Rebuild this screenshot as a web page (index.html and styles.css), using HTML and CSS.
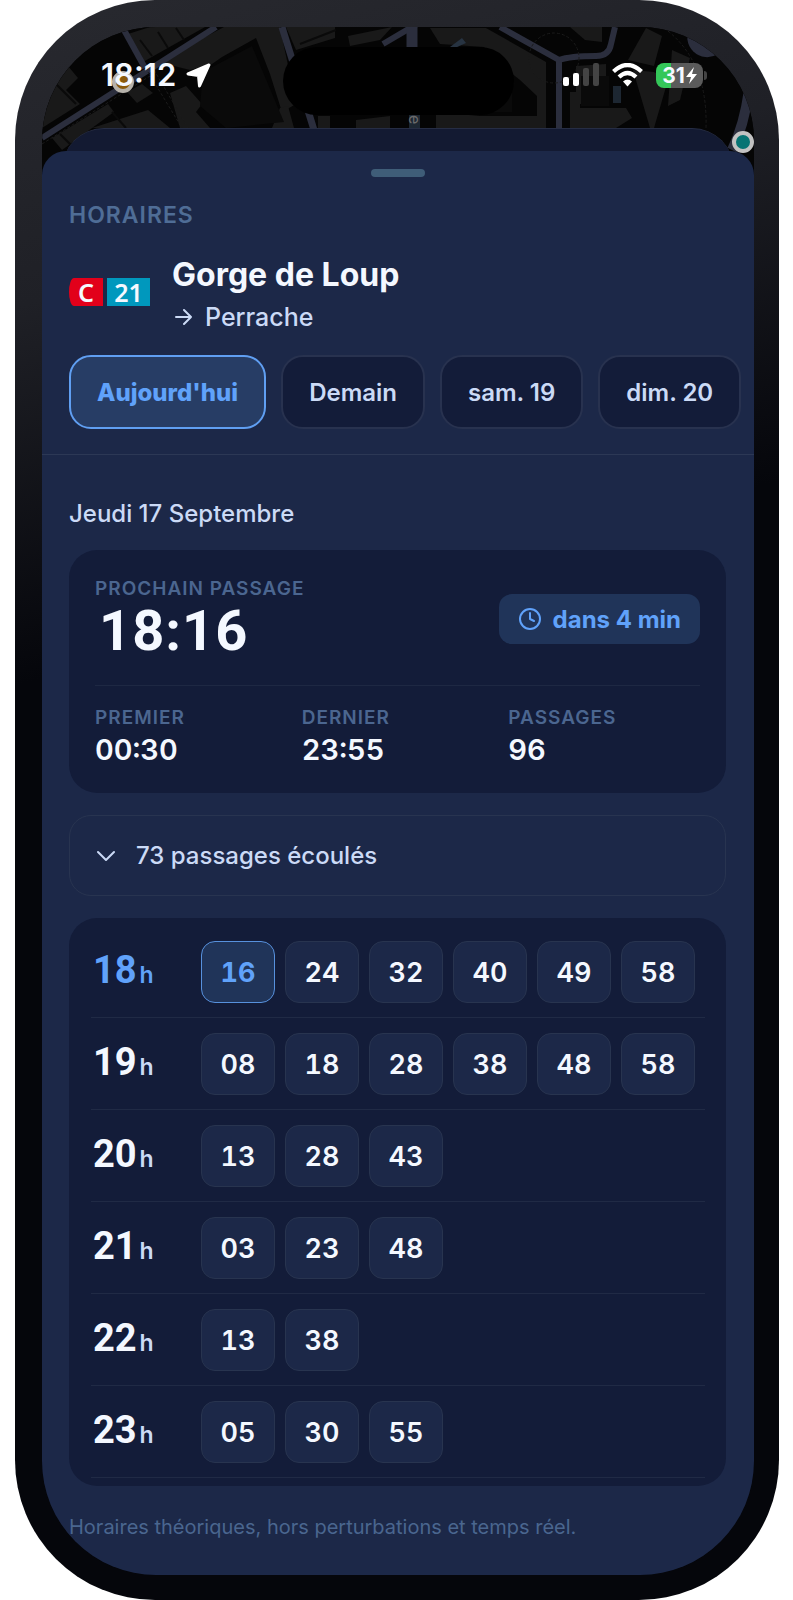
FILE: index.html
```html
<!DOCTYPE html>
<html lang="fr">
<head>
    <meta charset="UTF-8">
    <meta name="viewport" content="width=device-width, initial-scale=1.0">
    <title>Horaires - Gorge de Loup</title>
    <link rel="stylesheet" href="styles.css">
</head>
<body>
    <div class="phone">
        <div class="screen">
            <!-- Map behind the sheets -->
            <svg class="map" viewBox="42 27 712 150" preserveAspectRatio="xMidYMin slice" aria-hidden="true">
                <rect x="42" y="27" width="712" height="150" fill="#050505"/>
                <g fill="#191919">
                    <path d="M42 98 68 66 78 78 66 90 80 104 42 128z"/>
                    <path d="M128 34 150 27 205 27 143 62z"/>
                    <path d="M52 138 108 104 114 112 62 150z"/>
                    <path d="M92 128 148 110 170 128H92z"/>
                    <path d="M127 92 142 84 153 93 137 103z"/>
                    <path d="M158 62 224 27H280L296 104 282 112 270 74 256 38 222 57 212 64 190 70z"/>
                    <path d="M170 93 186 86 202 104 196 112 210 128H180z"/>
                    <path d="M286 27H335V38L296 50z"/>
                    <path d="M348 36 392 27 380 40 350 46z"/>
                    <path d="M280 108 288 106 294 128H272z"/>
                    <path d="M318 116H330V128H318z"/>
                    <path d="M356 120 390 116V128H356z"/>
                    <path d="M430 28H486L546 62V128H436V112L480 116H537V96L520 80 500 64 484 47 440 44z"/>
                    <path d="M570 92H580V108H626L632 118 616 128H570z"/>
                    <path d="M576 66 606 64V104H576z"/>
                    <path d="M628 60 646 28 662 36 654 66z"/>
                    <path d="M633 70 654 72 668 80 654 128H650z"/>
                    <path d="M570 27H602V42L585 40z"/>
                    <path d="M672 50 690 58 680 100 668 106z"/>
                </g>
                <g fill="#0a0a0a">
                    <path d="M203 72 252 46 284 122 226 128 200 106z"/>
                    <path d="M436 84 486 72 512 92V112H440z"/>
                    <rect x="581" y="76" width="28" height="30"/>
                </g>
                <g fill="none" stroke="#0a0a0a" stroke-width="2">
                    <path d="M56 84 76 104M140 40 152 56M158 32 168 48M176 28 184 40M112 112 126 128M60 134 74 148M490 56 514 84M300 44 336 30"/>
                </g>
                <g fill="none" stroke="#2b2e3d" stroke-width="6">
                    <path d="M42 138 216 27"/>
                    <path d="M124 30 145 68"/>
                    <path d="M282 27 314 130" stroke-width="7"/>
                    <path d="M383 44 434 14"/>
                    <path d="M412 27V50" stroke-width="11"/>
                    <path d="M500 27 559 60V130"/>
                    <path d="M559 60Q570 56 596 56Q609 56 611 44L615 27"/>
                    <path d="M749 90Q744 126 732 150" stroke-width="10"/>
                </g>
                <path d="M690 27A20 20 0 0 0 718 54z" fill="#2b2e3d"/>
                <path d="M450 47 462 38 466 43 455 48z" fill="#273341"/>
                <rect x="613" y="86" width="8" height="17" fill="#1d2732"/>
                <rect x="409" y="115" width="11" height="14" fill="#1d2732"/>
                <g fill="none" stroke="#1b1b1b" stroke-dasharray="3 2">
                    <circle cx="554" cy="58" r="25"/>
                    <path d="M148 72 182 128M154 70 188 128M664 28Q708 60 706 128M42 144 150 76"/>
                </g>
                <text class="map-label" transform="translate(409 115) rotate(90)">e</text>
                <circle cx="123" cy="82" r="9" fill="#8a5a0c" stroke="#b5b1aa" stroke-width="4"/>
                <circle cx="743" cy="142" r="9" fill="#077474" stroke="#c2c2c2" stroke-width="4"/>
            </svg>

            <!-- Status bar -->
            <div class="status-bar">
                <div class="status-left">
                    <span class="clock">18:12</span>
                    <svg width="25" height="25" viewBox="0 0 25 25" aria-hidden="true">
                        <path d="M23 2 2 11 12.500 12.500 13.500 23z" fill="#fff" stroke="#fff" stroke-width="3" stroke-linejoin="round"/>
                    </svg>
                </div>
                <div class="island"></div>
                <div class="status-right">
                    <svg width="36" height="24" viewBox="0 0 36 24" aria-hidden="true">
                        <rect x="0" y="14" width="6" height="9" rx="2" fill="#fff"/>
                        <rect x="10" y="10" width="6" height="13" rx="2" fill="#fff"/>
                        <rect x="20" y="5" width="6" height="18" rx="2" fill="#444"/>
                        <rect x="30" y="0" width="6" height="23" rx="2" fill="#444"/>
                    </svg>
                    <svg width="31" height="24" viewBox="0 0 31 24" aria-hidden="true">
                        <path d="M1.500 8.500Q15.500 -4.500 29.500 8.500M7 14Q15.500 6 24 14" fill="none" stroke="#fff" stroke-width="4.200"/>
                        <path d="M11 18.500Q15.500 14.500 20 18.500L15.500 23.500z" fill="#fff"/>
                    </svg>
                    <div class="battery">
                        <span>31</span>
                        <svg width="11" height="17" viewBox="0 0 11 17" aria-hidden="true">
                            <path d="M8 0 0 10H5L3 17 11 7H6z" fill="#fff"/>
                        </svg>
                    </div>
                </div>
            </div>

            <div class="sheet-back"></div>

            <!-- Timetable sheet -->
            <main class="sheet">
                <div class="handle"></div>
                <header class="sheet-header">
                    <p class="eyebrow">HORAIRES</p>
                    <div class="stop">
                        <div class="line-logo">
                            <span class="line-letter">C</span>
                            <span class="line-number">21</span>
                        </div>
                        <div class="stop-text">
                            <h1>Gorge de Loup</h1>
                            <p class="direction">
                                <svg width="17" height="18" viewBox="0 0 17 18" aria-hidden="true">
                                    <path d="M1 9H16M9 2 16 9 9 16" fill="none" stroke="currentColor" stroke-width="2" stroke-linecap="round" stroke-linejoin="round"/>
                                </svg>
                                Perrache
                            </p>
                        </div>
                    </div>
                    <nav class="days">
                        <button class="day active" type="button">Aujourd'hui</button>
                        <button class="day" type="button">Demain</button>
                        <button class="day" type="button">sam. 19</button>
                        <button class="day" type="button">dim. 20</button>
                    </nav>
                </header>

                <section class="content">
                    <h2 class="date">Jeudi 17 Septembre</h2>

                    <div class="next-card">
                        <div class="next-top">
                            <div>
                                <p class="label">PROCHAIN PASSAGE</p>
                                <p class="next-time">18:16</p>
                            </div>
                            <span class="countdown">
                                <svg width="24" height="24" viewBox="0 0 24 24" fill="none" stroke="currentColor" stroke-width="2" stroke-linecap="round" stroke-linejoin="round" aria-hidden="true">
                                    <circle cx="12" cy="12" r="10"/>
                                    <path d="M12 6V12L16 14"/>
                                </svg>
                                dans 4 min
                            </span>
                        </div>
                        <dl class="stats">
                            <div>
                                <dt class="label">PREMIER</dt>
                                <dd>00:30</dd>
                            </div>
                            <div>
                                <dt class="label">DERNIER</dt>
                                <dd>23:55</dd>
                            </div>
                            <div>
                                <dt class="label">PASSAGES</dt>
                                <dd>96</dd>
                            </div>
                        </dl>
                    </div>

                    <button class="past" type="button">
                        <svg width="18" height="12" viewBox="0 0 18 12" aria-hidden="true">
                            <path d="M1 2 9 10 17 2" fill="none" stroke="currentColor" stroke-width="2" stroke-linecap="round" stroke-linejoin="round"/>
                        </svg>
                        73 passages écoulés
                    </button>

                    <div class="hours-card">
                        <table class="hours">
                            <tr class="current">
                                <th scope="row">18<small>h</small></th>
                                <td><span class="minute next">16</span></td>
                                <td><span class="minute">24</span></td>
                                <td><span class="minute">32</span></td>
                                <td><span class="minute">40</span></td>
                                <td><span class="minute">49</span></td>
                                <td><span class="minute">58</span></td>
                            </tr>
                            <tr>
                                <th scope="row">19<small>h</small></th>
                                <td><span class="minute">08</span></td>
                                <td><span class="minute">18</span></td>
                                <td><span class="minute">28</span></td>
                                <td><span class="minute">38</span></td>
                                <td><span class="minute">48</span></td>
                                <td><span class="minute">58</span></td>
                            </tr>
                            <tr>
                                <th scope="row">20<small>h</small></th>
                                <td><span class="minute">13</span></td>
                                <td><span class="minute">28</span></td>
                                <td><span class="minute">43</span></td>
                                <td colspan="3"></td>
                            </tr>
                            <tr>
                                <th scope="row">21<small>h</small></th>
                                <td><span class="minute">03</span></td>
                                <td><span class="minute">23</span></td>
                                <td><span class="minute">48</span></td>
                                <td colspan="3"></td>
                            </tr>
                            <tr>
                                <th scope="row">22<small>h</small></th>
                                <td><span class="minute">13</span></td>
                                <td><span class="minute">38</span></td>
                                <td colspan="4"></td>
                            </tr>
                            <tr>
                                <th scope="row">23<small>h</small></th>
                                <td><span class="minute">05</span></td>
                                <td><span class="minute">30</span></td>
                                <td><span class="minute">55</span></td>
                                <td colspan="3"></td>
                            </tr>
                        </table>
                    </div>

                    <p class="note">Horaires théoriques, hors perturbations et temps réel.</p>
                </section>
            </main>
        </div>
    </div>
</body>
</html>
```

FILE: styles.css
```css
* {
    box-sizing: border-box;
}
body {
    margin: 0;
    padding: 0 14px 0 15px;
    background: #fff;
    font-family: Inter, "Liberation Sans", sans-serif;
    color: #f4f8ff;
}
h1, h2, p, dl, dd {
    margin: 0;
}
button {
    font-family: inherit;
    cursor: pointer;
}
svg {
    display: block;
    flex: none;
}

/* Phone frame */
.phone {
    padding: 27px 25px 25px 27px;
    border-radius: 140px;
    background: linear-gradient(165deg, #28292f 0%, #1f2026 17%, #05060b 38%);
}
.screen {
    position: relative;
    overflow: hidden;
    border-radius: 114px;
    background: #050505;
}
.map {
    position: absolute; /* Lies under the status bar and the sheets */
    top: 0;
    left: 0;
    width: 100%;
}
.map-label {
    font-size: 16px;
    fill: #6a6a6a;
}

/* Status bar */
.status-bar {
    position: relative;
    display: grid;
    grid-template-columns: minmax(0, 1fr) 231px minmax(0, 1fr);
    align-items: start;
    padding: 20px 45px 13px 45px;
}
.status-left {
    display: flex;
    align-items: center;
    gap: 10px;
    height: 56px;
    padding-left: 14px;
}
.clock {
    font-size: 31px;
    font-weight: 600;
    line-height: 36px;
}
.island {
    height: 68px;
    border-radius: 34px;
    background: #000;
}
.status-right {
    display: flex;
    align-items: center;
    justify-content: flex-end;
    gap: 13px;
    height: 56px;
}
.battery {
    position: relative;
    display: flex;
    align-items: center;
    justify-content: center;
    gap: 1px;
    width: 47px;
    height: 25px;
    margin-right: 6px;
    border-radius: 8px;
    background: linear-gradient(90deg, #34c759 31%, #5b5b5b 31%);
    font-size: 21px;
    font-weight: 700;
}
.battery::after {
    content: "";
    position: absolute;
    right: -4px;
    width: 3px;
    height: 9px;
    border-radius: 0 4px 4px 0;
    background: #444;
}

/* Sheets */
.sheet-back {
    position: relative;
    height: 60px;
    margin: 0 20px -37px;
    border-top: 1px solid #262d44;
    border-radius: 42px 42px 0 0;
    background: #131a32;
}
.sheet {
    position: relative;
    padding-top: 18px;
    border-radius: 24px 24px 0 0;
    background: #1c2848;
}
.handle {
    width: 54px;
    height: 8px;
    margin: 0 auto;
    border-radius: 4px;
    background: #3f5d78;
}
.sheet-header {
    padding: 24px 0 25px 27px;
    border-bottom: 1px solid #2c3855;
}
.eyebrow {
    font-size: 23px;
    font-weight: 600;
    line-height: 28px;
    letter-spacing: 1px;
    color: #4f6d96;
}
.stop {
    display: flex;
    align-items: center;
    gap: 22px;
    padding: 18px 0;
}
.line-logo {
    display: flex;
    gap: 4px;
    font-family: "Noto Sans", sans-serif;
    font-size: 25px;
    font-weight: 600;
    line-height: 28px;
    text-align: center;
}
.line-letter {
    width: 34px;
    border-radius: 5px 0 0 5px / 14px 0 0 14px;
    background: #e2001a;
}
.line-number {
    width: 43px;
    background: #0098bd;
}
.stop-text {
    padding-top: 6px;
}
h1 {
    font-size: 32px;
    font-weight: 700;
    line-height: 44px;
}
.direction {
    display: flex;
    align-items: center;
    gap: 13px;
    padding-left: 3px;
    font-size: 25px;
    font-weight: 500;
    line-height: 40px;
    color: #cbdaf6;
}

/* Day tabs */
.days {
    display: flex;
    gap: 15px;
    overflow: hidden;
}
.day {
    flex: none;
    height: 74px;
    padding: 0 26px;
    border: 2px solid #28324f;
    border-radius: 22px;
    background: #131c39;
    color: #cbdaf6;
    font-size: 24px;
    font-weight: 600;
}
.day.active {
    border-color: #609ff2;
    background: #273d65;
    color: #60a2fa;
    font-weight: 800;
}

.content {
    padding: 44px 28px 33px 27px;
}
.date {
    margin-bottom: 21px;
    font-size: 24px;
    font-weight: 500;
    line-height: 30px;
    color: #cbdaf6;
}

/* Next departure */
.next-card {
    padding: 26px 26px 24px;
    border-radius: 28px;
    background: #131c39;
}
.next-top {
    display: flex;
    align-items: center;
    justify-content: space-between;
    padding-bottom: 23px;
    border-bottom: 1px solid #1e2843;
}
.label {
    font-size: 19px;
    font-weight: 600;
    line-height: 26px;
    letter-spacing: 1px;
    color: #4b6690;
}
.next-time {
    padding: 0 0 2px 4px;
    font-family: Roboto, sans-serif;
    font-size: 56px;
    font-weight: 700;
    line-height: 58px;
    letter-spacing: 1px;
}
.countdown {
    display: flex;
    align-items: center;
    gap: 11px;
    height: 50px;
    padding: 0 19px;
    border-radius: 13px;
    background: #203459;
    color: #60a2fa;
    font-size: 24px;
    font-weight: 700;
}
.stats {
    display: grid;
    grid-template-columns: repeat(3, 1fr);
    gap: 15px;
    padding-top: 19px;
}
.stats dd {
    font-size: 29px;
    font-weight: 600;
    line-height: 38px;
    font-variant-numeric: tabular-nums;
}

.past {
    display: flex;
    align-items: center;
    gap: 21px;
    width: 100%;
    height: 81px;
    margin: 22px 0;
    padding: 0 27px;
    border: 1px solid #283450;
    border-radius: 22px;
    background: none;
    color: #cbdaf6;
    font-size: 24px;
    font-weight: 500;
}

/* Hours table */
.hours-card {
    padding: 8px 21px 8px 22px;
    border-radius: 28px;
    background: #131c39;
}
.hours {
    width: 100%;
    table-layout: fixed;
    border-collapse: separate;
    border-spacing: 0;
}
.hours th, .hours td {
    padding: 15px 10px 14px 0;
    border-bottom: 1px solid #202a45;
}
.hours th {
    width: 110px;
    padding: 0 0 4px 2px;
    font-family: Roboto, sans-serif;
    font-size: 38px;
    font-weight: 700;
    text-align: left;
}
.hours small {
    margin-left: 3px;
    font-family: Inter, sans-serif;
    font-size: 23px;
    font-weight: 600;
    color: #cbdaf6;
}
.minute {
    display: flex;
    align-items: center;
    justify-content: center;
    height: 62px;
    border: 1px solid #28344f;
    border-radius: 14px;
    background: #1c2848;
    font-size: 27px;
    font-weight: 600;
    font-variant-numeric: tabular-nums;
}
.minute.next {
    border-color: #5791dd;
    background: #203459;
    color: #60a2fa;
    font-weight: 700;
}
.hours .current th, .hours .current small {
    color: #60a2fa;
}

.note {
    margin-top: 26px;
    font-size: 20px;
    line-height: 30px;
    color: #4a668f;
}
```
